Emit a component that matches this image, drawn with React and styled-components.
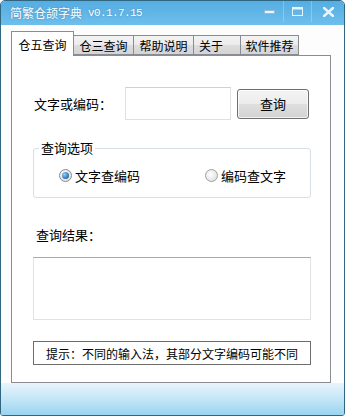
import React from "react";
import styled, { createGlobalStyle } from "styled-components";

const Global = createGlobalStyle`
  html, body { margin: 0; padding: 0; background: #ffffff; }
  body { font-family: "Noto Sans CJK SC", "Noto Sans", sans-serif; color: #000; }
  * { box-sizing: border-box; }
`;

const Window = styled.div`
  width: 345px;
  height: 416px;
  border: 1px solid #2f6680;
  border-radius: 5px 5px 3px 3px;
  overflow: hidden;
  display: flex;
  flex-direction: column;
  background: #fdfdfd;
`;

const TitleBar = styled.div`
  height: 24px;
  flex: none;
  display: flex;
  align-items: center;
  padding-left: 9px;
  background: linear-gradient(#56ade2, #6dbfec);
  color: #fff;
`;

const Title = styled.span`
  font-size: 12px;
  line-height: 14px;
  text-shadow: 0 0 2px rgba(40, 90, 130, 0.5);
`;

const Version = styled.span`
  font-family: "Liberation Mono", monospace;
  font-size: 11px;
  letter-spacing: -0.6px;
  margin-left: 6px;
  line-height: 14px;
  text-shadow: 0 0 2px rgba(40, 90, 130, 0.5);
`;

const Controls = styled.div`
  margin-left: auto;
  display: flex;
  height: 24px;
`;

const Ctrl = styled.div`
  width: ${(p) => p.$w}px;
  height: 21px;
  display: flex;
  align-items: center;
  justify-content: center;
  border-left: ${(p) => (p.$sep ? "1px solid rgba(255,255,255,0.25)" : "none")};
`;

const Body = styled.div`
  flex: none;
  height: 358px;
  padding-top: 6px;
  background: #fdfdfd;
`;

const TabStrip = styled.div`
  display: flex;
  align-items: flex-end;
  height: 25px;
  margin-left: 10px;
  margin-bottom: -1px;
  position: relative;
  z-index: 1;
`;

const Tab = styled.div`
  width: ${(p) => p.$w}px;
  height: ${(p) => (p.$active ? 25 : 20)}px;
  margin-bottom: ${(p) => (p.$active ? 0 : 1)}px;
  margin-left: ${(p) => (p.$first ? 0 : -1)}px;
  border: 1px solid #898c95;
  border-bottom: ${(p) => (p.$active ? "none" : "1px solid #898c95")};
  background: ${(p) =>
    p.$active ? "#ffffff" : "linear-gradient(#f3f3f3, #ebebeb 50%, #dddddd 51%, #d4d4d4)"};
  font-size: 12px;
  display: flex;
  align-items: center;
  justify-content: ${(p) => (p.$left ? "flex-start" : "center")};
  padding-left: ${(p) => (p.$left ? 5 : 0)}px;
  position: relative;
  z-index: ${(p) => (p.$active ? 2 : 1)};
  padding-top: ${(p) => (p.$active ? 0 : 1)}px;
`;

const Panel = styled.div`
  width: 320px;
  height: 328px;
  margin-left: 10px;
  border: 1px solid #898c95;
  background: #ffffff;
  padding: 31px 0 17px 21px;
  display: flex;
  flex-direction: column;
`;

const InputRow = styled.div`
  display: flex;
  align-items: center;
  height: 33px;
`;

const Label = styled.span`
  font-size: 13px;
  line-height: 18px;
  width: ${(p) => p.$w || "auto"};
  margin-left: ${(p) => p.$ml || 0}px;
  margin-top: ${(p) => p.$mt || 0}px;
  display: block;
`;

const TextInput = styled.div`
  width: 106px;
  height: 33px;
  border: 1px solid #e0e0e0;
  border-top-color: #d0d0d0;
  background: #fff;
`;

const Button = styled.div`
  width: 72px;
  height: 30px;
  margin-left: 6px;
  border: 1px solid #707070;
  border-radius: 3px;
  background: linear-gradient(#f4f4f4, #ececec 50%, #dfdfdf 51%, #d2d2d2);
  box-shadow: inset 0 0 0 1px rgba(255, 255, 255, 0.7);
  font-size: 13px;
  display: flex;
  align-items: center;
  justify-content: center;
`;

const Group = styled.fieldset`
  margin: 21px 0 0;
  padding: 0 0 13px;
  width: 278px;
  min-width: 0;
  border: 1px solid #d5dfe5;
  border-radius: 3px;
`;

const Legend = styled.legend`
  font-size: 13px;
  line-height: 14px;
  padding: 0 2px;
  margin-left: 5px;
`;

const RadioRow = styled.div`
  display: flex;
  align-items: center;
  height: 18px;
  margin-top: 11px;
  padding-left: 25px;
`;

const RadioItem = styled.div`
  display: flex;
  align-items: center;
  gap: 3px;
  width: ${(p) => (p.$w ? `${p.$w}px` : "auto")};
  font-size: 13px;
`;

const RadioCircle = styled.span`
  width: 13px;
  height: 13px;
  border-radius: 50%;
  border: 1px solid ${(p) => (p.$on ? "#8a8a8a" : "#a0a0a0")};
  background: radial-gradient(circle at 40% 40%, #ffffff, #d8d8d8);
  display: flex;
  align-items: center;
  justify-content: center;
  &::after {
    content: "";
    display: ${(p) => (p.$on ? "block" : "none")};
    width: 7px;
    height: 7px;
    border-radius: 50%;
    background: radial-gradient(circle at 35% 35%, #8fd0f7, #2a6fb0 70%, #1b4f86);
  }
`;

const ResultBox = styled.div`
  margin-top: 13px;
  width: 278px;
  height: 63px;
  border: 1px solid #e2e2e2;
  border-top-color: #a8a8a8;
  background: #fff;
`;

const Tip = styled.div`
  margin-top: 21px;
  width: 278px;
  height: 24px;
  border: 1px solid #6d6d6d;
  font-size: 12px;
  display: flex;
  align-items: center;
  justify-content: center;
`;

const Footer = styled.div`
  flex: 1;
  background: linear-gradient(#e8f5fc, #c4e6f7 50%, #99d4f1);
`;

const tabs = [
  { t: "仓五查询", w: 63 },
  { t: "仓三查询", w: 61 },
  { t: "帮助说明", w: 61 },
  { t: "关于", w: 48, left: true },
  { t: "软件推荐", w: 59 },
];

export default function App() {
  return (
    <>
      <Global />
      <Window>
        <TitleBar>
          <Title>简繁仓颉字典</Title>
          <Version>v0.1.7.15</Version>
          <Controls>
            <Ctrl $w={27}>
              <svg width="11" height="4" viewBox="0 0 11 4">
                <rect x="0.5" y="0.5" width="10" height="3" fill="#e8f4fb" stroke="#8fb6cc" strokeWidth="0.8" />
              </svg>
            </Ctrl>
            <Ctrl $w={28} $sep>
              <svg width="11" height="9" viewBox="0 0 11 9">
                <rect x="0.5" y="0.5" width="10" height="8" fill="none" stroke="#e8f4fb" strokeWidth="1" />
                <rect x="1" y="1" width="9" height="1.5" fill="#e8f4fb" />
              </svg>
            </Ctrl>
            <Ctrl $w={33} $sep>
              <svg width="11" height="10" viewBox="0 0 11 10">
                <path d="M1 1 L10 9 M10 1 L1 9" stroke="#e8f4fb" strokeWidth="2.6" strokeLinecap="square" />
              </svg>
            </Ctrl>
          </Controls>
        </TitleBar>
        <Body>
          <TabStrip>
            {tabs.map((tb, i) => (
              <Tab key={tb.t} $w={tb.w} $first={i === 0} $active={i === 0} $left={tb.left}>
                {tb.t}
              </Tab>
            ))}
          </TabStrip>
          <Panel>
            <InputRow>
              <Label $w="91px" $ml={1}>文字或编码：</Label>
              <TextInput />
              <Button>查询</Button>
            </InputRow>
            <Group>
              <Legend>查询选项</Legend>
              <RadioRow>
                <RadioItem $w={146}>
                  <RadioCircle $on />
                  <span>文字查编码</span>
                </RadioItem>
                <RadioItem>
                  <RadioCircle />
                  <span>编码查文字</span>
                </RadioItem>
              </RadioRow>
            </Group>
            <Label $ml={3} $mt={28}>查询结果：</Label>
            <ResultBox />
            <Tip>提示：不同的输入法，其部分文字编码可能不同</Tip>
          </Panel>
        </Body>
        <Footer />
      </Window>
    </>
  );
}
